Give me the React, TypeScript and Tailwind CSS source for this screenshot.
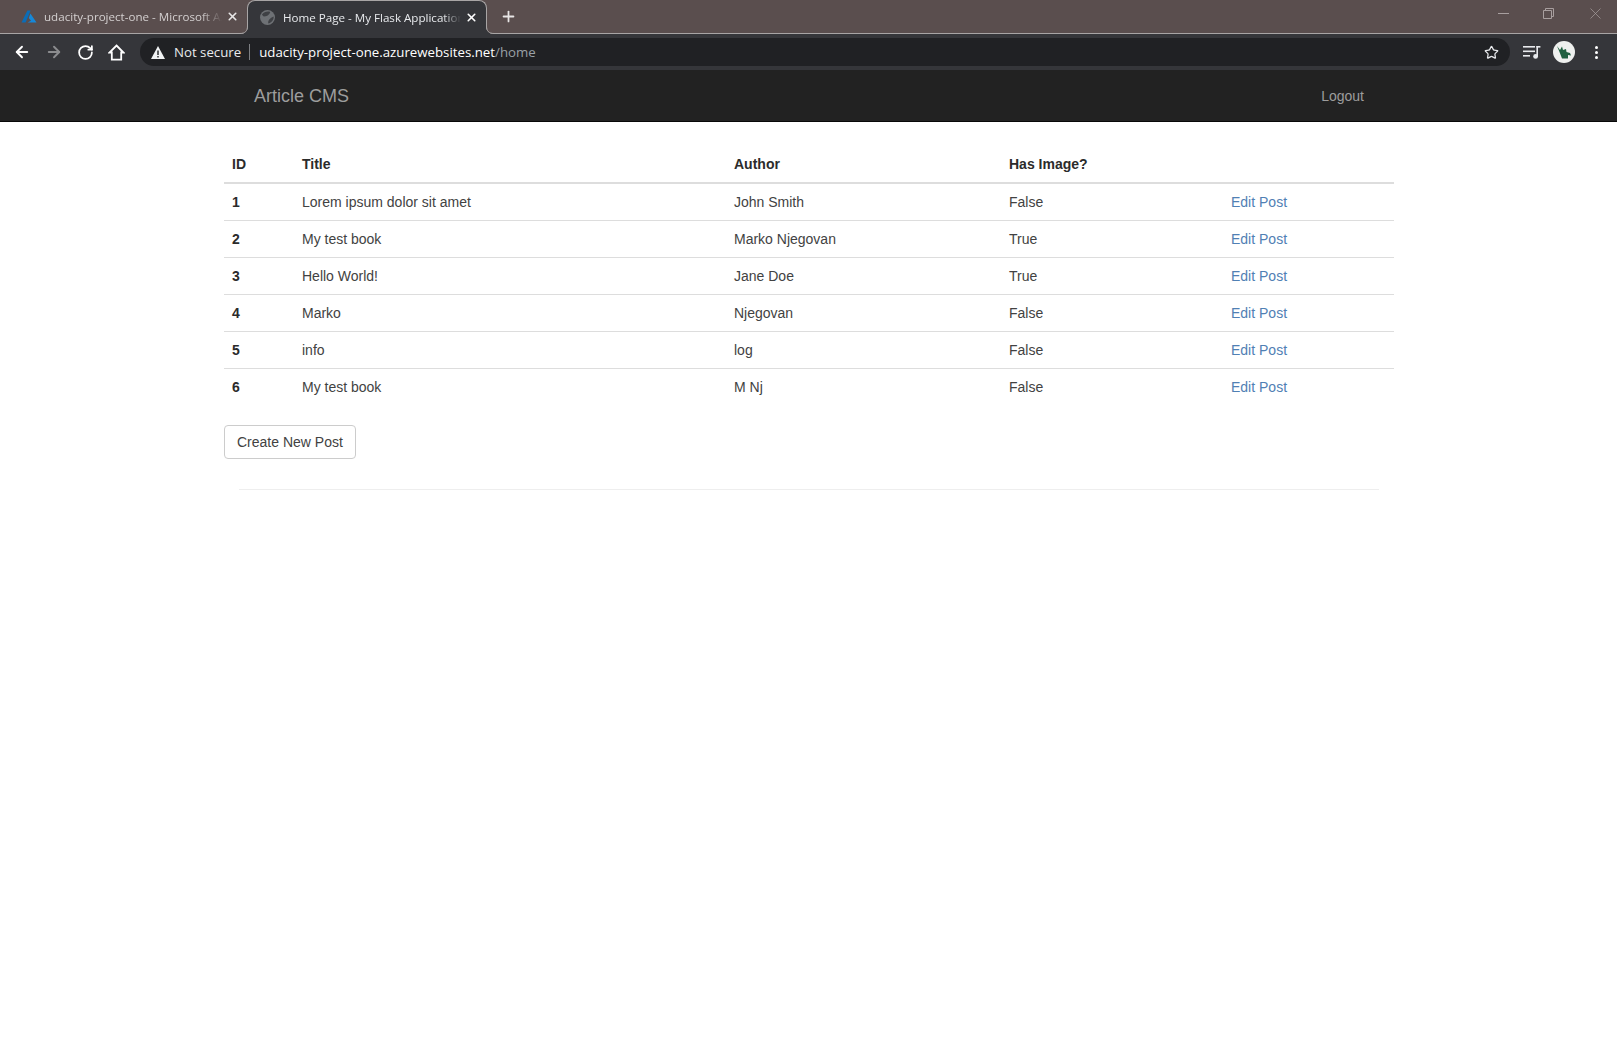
import { ArrowLeft, ArrowRight, Plus, RotateCw, Star, X } from 'lucide-react';

const posts = [
  { id: 1, title: 'Lorem ipsum dolor sit amet', author: 'John Smith', hasImage: 'False' },
  { id: 2, title: 'My test book', author: 'Marko Njegovan', hasImage: 'True' },
  { id: 3, title: 'Hello World!', author: 'Jane Doe', hasImage: 'True' },
  { id: 4, title: 'Marko', author: 'Njegovan', hasImage: 'False' },
  { id: 5, title: 'info', author: 'log', hasImage: 'False' },
  { id: 6, title: 'My test book', author: 'M Nj', hasImage: 'False' },
];

function AzureIcon() {
  return (
    <svg width="16" height="13" viewBox="0 0 16 13" className="shrink-0">
      <path d="M6.4 0.5 L9.6 0.5 L4.6 12.5 L0.5 12.5 Z" fill="#0a6db8" />
      <path d="M9.4 3.5 L15.5 12.5 L6.6 12.5 L10 10.8 L7.8 8 Z" fill="#1688d8" />
    </svg>
  );
}

function GlobeIcon() {
  return (
    <svg width="15" height="15" viewBox="0 0 16 16" className="shrink-0">
      <circle cx="8" cy="8" r="8" fill="#6e7175" />
      <path d="M2 5 C4 2 8 1 11 2 C10 5 7 7 4 7 Z M14.5 7 C15 10 13 13 9 14.5 C8 12 10 9 14.5 7 Z" fill="#3f4145" />
    </svg>
  );
}

function WarningIcon() {
  return (
    <svg width="14" height="13" viewBox="0 0 14 13" className="shrink-0">
      <path d="M7 0 L14 13 L0 13 Z" fill="#f1f3f4" />
      <rect x="6.3" y="4.5" width="1.4" height="4.5" fill="#202124" />
      <rect x="6.3" y="10" width="1.4" height="1.5" fill="#202124" />
    </svg>
  );
}

function HomeIcon() {
  return (
    <svg width="17" height="17" viewBox="0 0 17 17" fill="none" stroke="currentColor" strokeWidth="1.8" className="shrink-0">
      <path d="M8.5 1.5 L15.5 8.5 H13.2 V15.6 H3.8 V8.5 H1.5 Z" strokeLinejoin="miter" />
    </svg>
  );
}

function QueueIcon() {
  return (
    <svg width="18" height="14" viewBox="0 0 18 14" className="shrink-0">
      <rect x="0" y="1" width="12" height="1.6" fill="#e8eaed" />
      <rect x="0" y="5.5" width="12" height="1.6" fill="#e8eaed" />
      <rect x="0" y="10" width="7" height="1.6" fill="#e8eaed" />
      <rect x="13.4" y="1" width="1.6" height="10.5" fill="#e8eaed" />
      <rect x="13.4" y="1" width="4" height="1.6" fill="#e8eaed" />
      <circle cx="12.6" cy="11.4" r="2.4" fill="#e8eaed" />
    </svg>
  );
}

function Avatar() {
  return (
    <div className="ml-[12px] flex h-[22px] w-[22px] shrink-0 items-center justify-center rounded-full bg-[#eef0ee]">
      <svg width="16" height="15" viewBox="0 0 16 15">
        <path d="M1 1 L4 5 L6 1.5 L7 5 L10 4 L10.5 7 L14 8 L15 10.5 L12 10 L12 13.5 L6 13.5 L3.5 7 Z" fill="#1f6040" />
      </svg>
    </div>
  );
}

function TabEar({ side }: { side: 'left' | 'right' }) {
  // concave corner where the active tab meets the strip's bottom line
  return (
    <svg
      width="8"
      height="8"
      viewBox="0 0 8 8"
      className={side === 'left' ? 'absolute bottom-0 left-[-8px]' : 'absolute bottom-0 right-[-8px] -scale-x-100'}
    >
      <path d="M0 8 C5 8 8 5 8 0 L8 8 Z" fill="#35363a" />
      <path d="M0 7.5 C5 7.5 7.5 5 7.5 0" fill="none" stroke="#a8a5a5" />
    </svg>
  );
}

function TabStrip() {
  return (
    <div className="flex h-[34px] items-stretch bg-[#5a4e4e] text-[11.6px] font-['Open_Sans',sans-serif]">
      <div className="flex w-[247px] shrink-0 items-center border-b border-[#a8a5a5] pl-[21px] pr-[8px] text-[#d4d0d0]">
        <AzureIcon />
        <span className="ml-[7px] flex-1 overflow-hidden whitespace-nowrap [mask-image:linear-gradient(to_right,black_88%,transparent)]">
          udacity-project-one - Microsoft Azure
        </span>
        <X size={13} strokeWidth={3} className="ml-[4px] shrink-0 text-[#e8e6e6]" />
      </div>
      <div className="relative flex w-[240px] shrink-0 items-center rounded-t-[8px] border border-b-0 border-[#a8a5a5] bg-[#35363a] pl-[12px] pr-[8px] text-[#e8eaed]">
        <TabEar side="left" />
        <GlobeIcon />
        <span className="ml-[8px] flex-1 overflow-hidden whitespace-nowrap [mask-image:linear-gradient(to_right,black_90%,transparent)]">
          Home Page - My Flask Application
        </span>
        <X size={13} strokeWidth={3} className="ml-[4px] shrink-0 text-white" />
        <TabEar side="right" />
      </div>
      <div className="flex flex-1 items-center justify-between border-b border-[#a8a5a5] pl-[13px] pr-[14px]">
        <Plus size={17} strokeWidth={2.5} className="text-[#e8e6e6]" />
        <div className="mb-[6px] flex items-center gap-[34px] text-[#a89f9f]">
          <svg width="11" height="2" viewBox="0 0 11 2"><rect width="11" height="1" fill="currentColor" /></svg>
          <svg width="11" height="11" viewBox="0 0 11 11" fill="none" stroke="currentColor">
            <path d="M0.5 2.5 H8.5 V10.5 H0.5 Z M2.5 2.5 V0.5 H10.5 V8.5 H8.5" />
          </svg>
          <svg width="15" height="11" viewBox="0 0 11 11" fill="none" stroke="currentColor" strokeWidth="0.7">
            <path d="M0.5 0.5 L10.5 10.5 M10.5 0.5 L0.5 10.5" />
          </svg>
        </div>
      </div>
    </div>
  );
}

function Toolbar() {
  return (
    <div className="flex h-[36px] items-start bg-[#35363a] pl-[13px] pt-[4px] font-['Open_Sans',sans-serif]">
      <div className="flex h-[28px] w-[127px] shrink-0 items-center gap-[14px] text-white">
        <ArrowLeft size={18} strokeWidth={2.5} />
        <ArrowRight size={18} strokeWidth={2.5} className="text-[#8b8c8e]" />
        <RotateCw size={17} strokeWidth={2.5} />
        <HomeIcon />
      </div>
      <div className="flex h-[28px] w-[1370px] shrink-0 items-center rounded-full bg-[#202124] pl-[11px] pr-[11px] text-[13.25px]">
        <WarningIcon />
        <span className="ml-[9px] text-[#e8eaed]">Not secure</span>
        <span className="ml-[8px] h-[16px] w-px bg-[#7d7f83]" />
        <span className="ml-[9px] text-white">udacity-project-one.azurewebsites.net</span>
        <span className="text-[#9aa0a6]">/home</span>
        <Star size={15} strokeWidth={2} className="ml-auto text-[#e8eaed]" />
      </div>
      <div className="flex h-[28px] items-center pl-[13px]">
        <QueueIcon />
        <Avatar />
        <div className="ml-[20px] flex flex-col gap-[2px]">
          <span className="h-[3px] w-[3px] rounded-full bg-white" />
          <span className="h-[3px] w-[3px] rounded-full bg-white" />
          <span className="h-[3px] w-[3px] rounded-full bg-white" />
        </div>
      </div>
    </div>
  );
}

export default function App() {
  return (
    <div className="min-h-[1049px] bg-white font-['Liberation_Sans',Arial,sans-serif] text-[14px] leading-[20px] text-[#424242]">
      <TabStrip />
      <Toolbar />

      <nav className="h-[52px] border-b border-[#080808] bg-[#222]">
        <div className="ml-[224px] flex h-full w-[1170px] items-center justify-between pl-[30px] pr-[30px] text-[#9d9d9d]">
          <a className="text-[18px]">Article CMS</a>
          <a>Logout</a>
        </div>
      </nav>

      <div className="ml-[224px] w-[1170px] pt-[24px]">
        <table className="w-full table-fixed border-collapse">
          <colgroup>
            <col className="w-[70px]" />
            <col className="w-[432px]" />
            <col className="w-[275px]" />
            <col className="w-[222px]" />
            <col />
          </colgroup>
          <thead>
            <tr className="border-b-2 border-[#ddd] text-left text-[#2b2b2b]">
              <th className="p-2 font-bold">ID</th>
              <th className="p-2 font-bold">Title</th>
              <th className="p-2 font-bold">Author</th>
              <th className="p-2 font-bold">Has Image?</th>
              <th className="p-2" />
            </tr>
          </thead>
          <tbody>
            {posts.map((post) => (
              <tr key={post.id} className="border-t border-[#ddd] first:border-t-0">
                <td className="p-2 font-bold text-[#2b2b2b]">{post.id}</td>
                <td className="p-2">{post.title}</td>
                <td className="p-2">{post.author}</td>
                <td className="p-2">{post.hasImage}</td>
                <td className="p-2">
                  <a className="text-[#5080b4]">Edit Post</a>
                </td>
              </tr>
            ))}
          </tbody>
        </table>

        <button
          type="button"
          className="mt-[20px] block h-[34px] rounded-[4px] border border-[#ccc] bg-white px-[12px] text-[#424242]"
        >
          Create New Post
        </button>

        <hr className="mx-[15px] mt-[30px] border-t border-[#eee]" />
      </div>
    </div>
  );
}
